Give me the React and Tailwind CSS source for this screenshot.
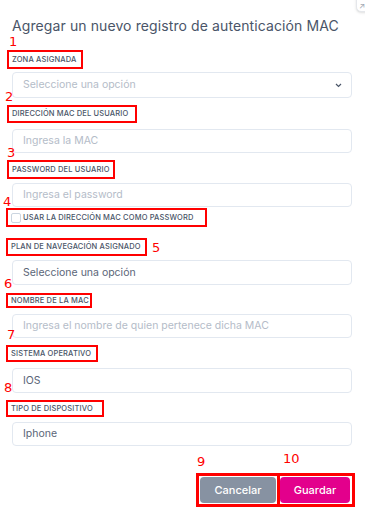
import React from 'react';

const font = { fontFamily: 'Inter, "Noto Sans", sans-serif' };

// red annotation number, sits over the previous control
const Num = ({ n, className }) => (
  <span
    className={`absolute text-[13px] leading-none text-[#ff0000] ${className}`}
    style={{ fontFamily: '"DejaVu Sans", sans-serif' }}
  >
    {n}
  </span>
);

const Label = ({ children, n, numClass, className }) => (
  <div className={`relative flex items-center border-2 border-[#ff0000] pl-[3px] ${className}`}>
    <span className="text-[7.5px] font-medium uppercase tracking-[0.15px] text-[#4a5568] whitespace-nowrap">
      {children}
    </span>
    <Num n={n} className={numClass} />
  </div>
);

const Input = ({ text, muted = true, className = 'h-[24px]', chevron = false }) => (
  <div
    className={`ml-[12px] mr-[13px] flex items-center justify-between rounded-[4px] border border-[#e2e8f0] bg-white pl-[10px] pr-[9px] ${className}`}
  >
    <span className={`text-[10.5px] ${muted ? 'text-[#b4bcc8]' : 'text-[#5a6577]'}`}>{text}</span>
    {chevron && (
      <svg width="7" height="5" viewBox="0 0 7 5" fill="none">
        <path d="M1 1l2.5 2.5L6 1" stroke="#4a5568" strokeWidth="1.2" />
      </svg>
    )}
  </div>
);

export default function App() {
  return (
    <div className="relative w-[365px] h-[523px] overflow-hidden bg-white" style={font}>
      {/* close button peeking at the corner */}
      <div className="absolute left-[356px] top-[-12px] flex h-[24px] w-[24px] items-end justify-start rounded-[5px] border border-[#e5e7eb] bg-white pb-[1px] pl-[2px] shadow-sm">
        <span className="text-[8px] leading-none text-[#9ca3af]">↗</span>
      </div>

      <div className="pt-[15px]">
        <h1 className="pl-[12px] text-[14px] leading-[22px] tracking-[0.1px] text-[#4a5568]">
          Agregar un nuevo registro de autenticación MAC
        </h1>

        <Label n="1" numClass="left-[0px] top-[-17px]" className="ml-[7px] mt-[13px] h-[19px] w-[76px]">
          Zona asignada
        </Label>
        <Input text="Seleccione una opción" chevron className="mt-[3px] h-[26px]" />

        <Label n="2" numClass="left-[-4px] top-[-17px]" className="ml-[7px] mt-[7px] h-[18px] w-[130px]">
          Dirección MAC del usuario
        </Label>
        <Input text="Ingresa la MAC" className="mt-[6px] h-[24px]" />

        <Label n="3" numClass="left-[-2px] top-[-16px]" className="ml-[7px] mt-[7px] h-[19px] w-[108px]">
          Password del usuario
        </Label>
        <Input text="Ingresa el password" className="mt-[4px] h-[24px]" />

        <div className="relative ml-[6px] mt-[1px] flex h-[19px] w-[201px] items-center gap-[2px] border-2 border-[#ff0000] pl-[3px]">
          <span className="h-[10px] w-[10px] rounded-[2px] border border-[#cbd5e0] bg-white" />
          <span className="text-[7.5px] font-medium uppercase tracking-[0.15px] text-[#4a5568] whitespace-nowrap">
            Usar la dirección MAC como password
          </span>
          <Num n="4" className="left-[-5px] top-[-15px]" />
        </div>

        <Label n="5" numClass="left-[144px] top-[1px]" className="ml-[6px] mt-[11px] h-[18px] w-[141px]">
          Plan de navegación asignado
        </Label>
        <Input text="Seleccione una opción" muted={false} className="mt-[4px] h-[25px]" />

        <Label n="6" numClass="left-[-4px] top-[-18px]" className="ml-[6px] mt-[8px] h-[15px] w-[86px]">
          Nombre de la MAC
        </Label>
        <Input text="Ingresa el nombre de quien pertenece dicha MAC" className="mt-[6px] h-[24px]" />

        <Label n="7" numClass="left-[-1px] top-[-19px]" className="ml-[6px] mt-[7px] h-[17px] w-[92px]">
          Sistema operativo
        </Label>
        <Input text="IOS" muted={false} className="mt-[6px] h-[25px]" />

        <Label n="8" numClass="left-[-4px] top-[-21px]" className="ml-[6px] mt-[7px] h-[17px] w-[98px]">
          Tipo de dispositivo
        </Label>
        <Input text="Iphone" muted={false} className="mt-[5px] h-[24px]" />

        <div className="mt-[27px] flex justify-end pr-[10px]">
          <div className="relative border-[3px] border-[#ff0000] p-[1px]">
            <button className="flex h-[26px] w-[76px] items-center justify-center rounded-[4px] bg-[#8792a2] text-[11px] font-medium text-white">
              Cancelar
            </button>
            <Num n="9" className="left-[-2px] top-[-21px]" />
          </div>
          <div className="relative border-[3px] border-l-0 border-[#ff0000] py-[1px] pr-[2px]">
            <button className="flex h-[26px] w-[70px] items-center justify-center rounded-[4px] bg-[#e3008c] text-[11px] font-medium text-white">
              Guardar
            </button>
            <Num n="10" className="left-[3px] top-[-24px]" />
          </div>
        </div>
      </div>
    </div>
  );
}
